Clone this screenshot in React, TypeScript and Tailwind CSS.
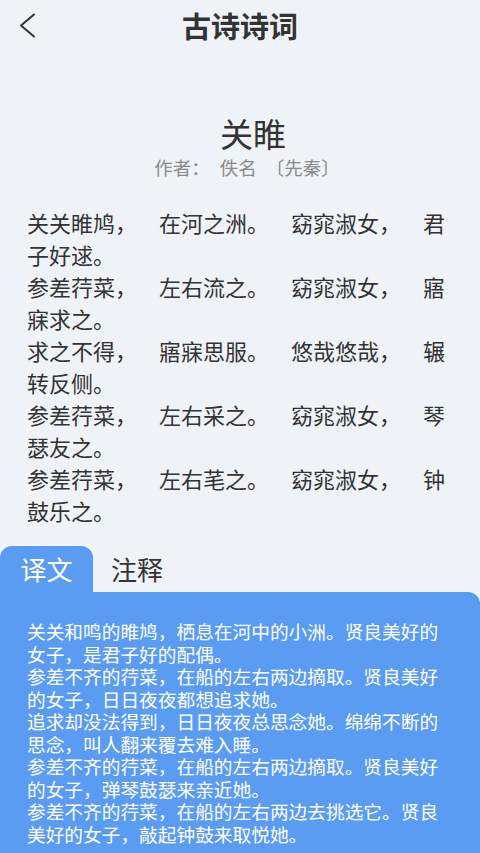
const poem = [
  "关关睢鸠，　在河之洲。　窈窕淑女，　君子好逑。",
  "参差荇菜，　左右流之。　窈窕淑女，　寤寐求之。",
  "求之不得，　寤寐思服。　悠哉悠哉，　辗转反侧。",
  "参差荇菜，　左右采之。　窈窕淑女，　琴瑟友之。",
  "参差荇菜，　左右芼之。　窈窕淑女，　钟鼓乐之。",
];

const translation = [
  "关关和鸣的睢鸠，栖息在河中的小洲。贤良美好的女子，是君子好的配偶。",
  "参差不齐的荇菜，在船的左右两边摘取。贤良美好的女子，日日夜夜都想追求她。",
  "追求却没法得到，日日夜夜总思念她。绵绵不断的思念，叫人翻来覆去难入睡。",
  "参差不齐的荇菜，在船的左右两边摘取。贤良美好的女子，弹琴鼓瑟来亲近她。",
  "参差不齐的荇菜，在船的左右两边去挑选它。贤良美好的女子，敲起钟鼓来取悦她。",
];

export default function App() {
  return (
    <div
      className="min-h-[853px] w-[480px] bg-[#eff2f7] flex flex-col text-[#333333] [text-spacing-trim:space-all]"
      style={{ fontFamily: '"Noto Sans CJK SC", "Noto Sans", sans-serif' }}
    >
      <header className="relative h-[50px] flex items-center justify-center">
        <button className="absolute left-[16px] top-[11px] text-[#333333]">
          <svg width="22" height="28" viewBox="0 0 22 28" fill="none">
            <path d="M18 3.5 L5 14.5 L18 25.5" stroke="currentColor" strokeWidth="2" strokeLinecap="round" strokeLinejoin="round" />
          </svg>
        </button>
        <h1 className="text-[29px] font-bold leading-[50px]">古诗诗词</h1>
      </header>

      <div className="mt-[63px] flex flex-col items-center">
        <div className="text-[33px] leading-[40px] pl-[26px]">关睢</div>
        <div className="mt-[2px] flex text-[18.5px] leading-[24px] text-[#8a8a8a] pl-[14px]">
          <span>作者：</span>
          <span className="ml-[10px]">佚名</span>
          <span className="ml-[9px]">〔先秦〕</span>
        </div>
      </div>

      <div className="mt-[27px] px-[27px] text-[22px] leading-[32px]">
        {poem.map((line) => (
          <p key={line}>{line}</p>
        ))}
      </div>

      <div className="mt-[20px] flex items-end">
        <div className="w-[93px] h-[46px] bg-[#5b9cf3] rounded-t-[12px] flex items-center justify-center text-white text-[26px] leading-[46px]">
          译文
        </div>
        <div className="ml-[18px] h-[46px] text-[26px] leading-[46px] text-[#333333]">注释</div>
      </div>

      <div className="flex-1 bg-[#5b9cf3] rounded-tr-[12px] px-[27px] pt-[28px] pb-[8px] text-white text-[18.7px] leading-[22.5px]">
        {translation.map((line) => (
          <p key={line}>{line}</p>
        ))}
      </div>
    </div>
  );
}
